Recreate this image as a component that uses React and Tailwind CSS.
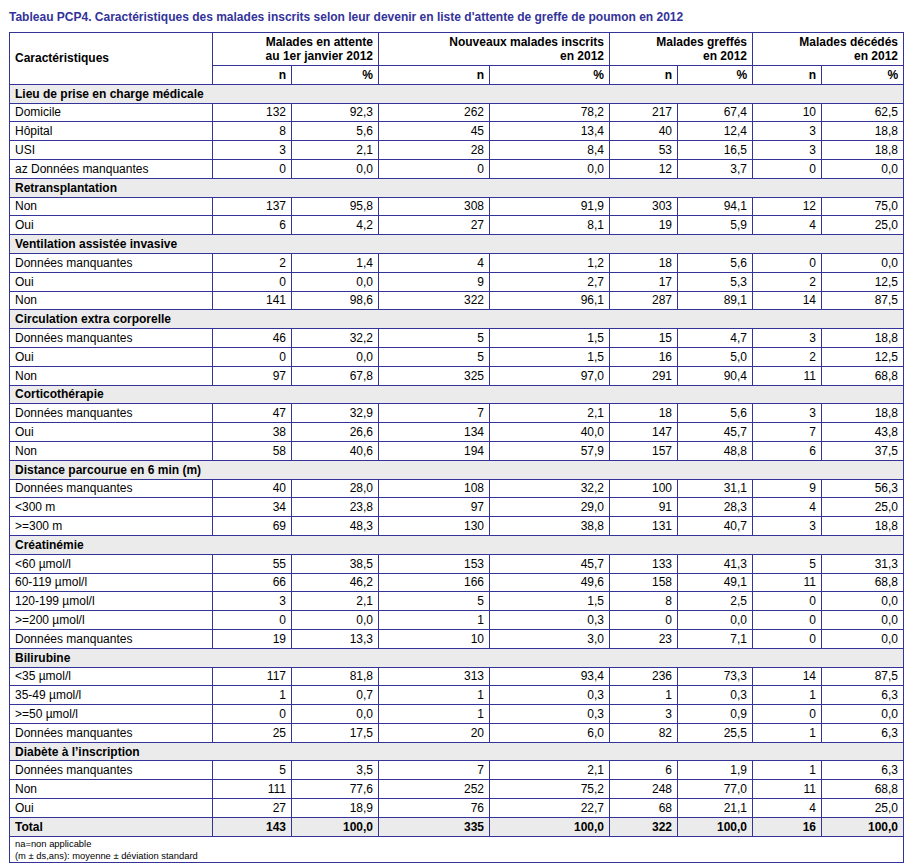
const sections = [
  {
    title: 'Lieu de prise en charge médicale',
    rows: [
      ['Domicile', '132', '92,3', '262', '78,2', '217', '67,4', '10', '62,5'],
      ['Hôpital', '8', '5,6', '45', '13,4', '40', '12,4', '3', '18,8'],
      ['USI', '3', '2,1', '28', '8,4', '53', '16,5', '3', '18,8'],
      ['az Données manquantes', '0', '0,0', '0', '0,0', '12', '3,7', '0', '0,0'],
    ],
  },
  {
    title: 'Retransplantation',
    rows: [
      ['Non', '137', '95,8', '308', '91,9', '303', '94,1', '12', '75,0'],
      ['Oui', '6', '4,2', '27', '8,1', '19', '5,9', '4', '25,0'],
    ],
  },
  {
    title: 'Ventilation assistée invasive',
    rows: [
      ['Données manquantes', '2', '1,4', '4', '1,2', '18', '5,6', '0', '0,0'],
      ['Oui', '0', '0,0', '9', '2,7', '17', '5,3', '2', '12,5'],
      ['Non', '141', '98,6', '322', '96,1', '287', '89,1', '14', '87,5'],
    ],
  },
  {
    title: 'Circulation extra corporelle',
    rows: [
      ['Données manquantes', '46', '32,2', '5', '1,5', '15', '4,7', '3', '18,8'],
      ['Oui', '0', '0,0', '5', '1,5', '16', '5,0', '2', '12,5'],
      ['Non', '97', '67,8', '325', '97,0', '291', '90,4', '11', '68,8'],
    ],
  },
  {
    title: 'Corticothérapie',
    rows: [
      ['Données manquantes', '47', '32,9', '7', '2,1', '18', '5,6', '3', '18,8'],
      ['Oui', '38', '26,6', '134', '40,0', '147', '45,7', '7', '43,8'],
      ['Non', '58', '40,6', '194', '57,9', '157', '48,8', '6', '37,5'],
    ],
  },
  {
    title: 'Distance parcourue en 6 min (m)',
    rows: [
      ['Données manquantes', '40', '28,0', '108', '32,2', '100', '31,1', '9', '56,3'],
      ['<300 m', '34', '23,8', '97', '29,0', '91', '28,3', '4', '25,0'],
      ['>=300 m', '69', '48,3', '130', '38,8', '131', '40,7', '3', '18,8'],
    ],
  },
  {
    title: 'Créatinémie',
    rows: [
      ['<60 µmol/l', '55', '38,5', '153', '45,7', '133', '41,3', '5', '31,3'],
      ['60-119 µmol/l', '66', '46,2', '166', '49,6', '158', '49,1', '11', '68,8'],
      ['120-199 µmol/l', '3', '2,1', '5', '1,5', '8', '2,5', '0', '0,0'],
      ['>=200 µmol/l', '0', '0,0', '1', '0,3', '0', '0,0', '0', '0,0'],
      ['Données manquantes', '19', '13,3', '10', '3,0', '23', '7,1', '0', '0,0'],
    ],
  },
  {
    title: 'Bilirubine',
    rows: [
      ['<35 µmol/l', '117', '81,8', '313', '93,4', '236', '73,3', '14', '87,5'],
      ['35-49 µmol/l', '1', '0,7', '1', '0,3', '1', '0,3', '1', '6,3'],
      ['>=50 µmol/l', '0', '0,0', '1', '0,3', '3', '0,9', '0', '0,0'],
      ['Données manquantes', '25', '17,5', '20', '6,0', '82', '25,5', '1', '6,3'],
    ],
  },
  {
    title: 'Diabète à l’inscription',
    rows: [
      ['Données manquantes', '5', '3,5', '7', '2,1', '6', '1,9', '1', '6,3'],
      ['Non', '111', '77,6', '252', '75,2', '248', '77,0', '11', '68,8'],
      ['Oui', '27', '18,9', '76', '22,7', '68', '21,1', '4', '25,0'],
    ],
  },
]

const total = ['Total', '143', '100,0', '335', '100,0', '322', '100,0', '16', '100,0']

const groups = [
  ['Malades en attente', 'au 1er janvier 2012'],
  ['Nouveaux malades inscrits', 'en 2012'],
  ['Malades greffés', 'en 2012'],
  ['Malades décédés', 'en 2012'],
]

const widths = [203, 79, 87, 111, 120, 68, 75, 69, 82]

const cell = 'border border-[#333399] px-[5px] py-0 h-[18.8px] align-middle'

const DataRow = ({ row, bold }) => (
  <tr className={bold ? 'bg-[#ebebeb] font-bold' : ''}>
    {row.map((v, i) => (
      <td key={i} className={`${cell} ${i === 0 ? 'text-left' : 'text-right'}`}>
        {v}
      </td>
    ))}
  </tr>
)

const App = () => {
  return (
    <div className="bg-white min-h-[867px] font-['Liberation_Sans',Arial,sans-serif] text-[12px] leading-[14px] text-black">
      <div className="pl-[9px] pt-[10px] font-bold text-[#333399]">
        Tableau PCP4. Caractéristiques des malades inscrits selon leur devenir en liste d'attente de greffe de poumon en 2012
      </div>
      <table className="ml-[9px] mt-[8px] w-[895px] table-fixed border-collapse border border-[#333399]">
        <colgroup>
          {widths.map((w, i) => (
            <col key={i} style={{ width: w }} />
          ))}
        </colgroup>
        <thead>
          <tr>
            <th rowSpan={2} className="border border-[#333399] px-[5px] text-left font-bold align-middle">
              Caractéristiques
            </th>
            {groups.map(([a, b]) => (
              <th key={a} colSpan={2} className="border border-[#333399] px-[5px] h-[33px] text-right font-bold align-middle">
                {a}
                <br />
                {b}
              </th>
            ))}
          </tr>
          <tr>
            {groups.map(([a]) => [
              <th key={a + 'n'} className={`${cell} text-right font-bold`}>n</th>,
              <th key={a + 'p'} className={`${cell} text-right font-bold`}>%</th>,
            ])}
          </tr>
        </thead>
        <tbody>
          {sections.map((s) => [
            <tr key={s.title} className="bg-[#ebebeb]">
              <td colSpan={9} className={`${cell} font-bold text-left`}>
                {s.title}
              </td>
            </tr>,
            ...s.rows.map((r, i) => <DataRow key={s.title + i} row={r} />),
          ])}
          <DataRow row={total} bold />
          <tr>
            <td colSpan={9} className="border border-[#333399] px-[5px] pt-[1px] pb-0 h-[26px] align-top text-[9.4px] leading-[12px]">
              na=non applicable
              <br />
              (m ± ds,ans): moyenne ± déviation standard
            </td>
          </tr>
        </tbody>
      </table>
    </div>
  )
}

export default App
